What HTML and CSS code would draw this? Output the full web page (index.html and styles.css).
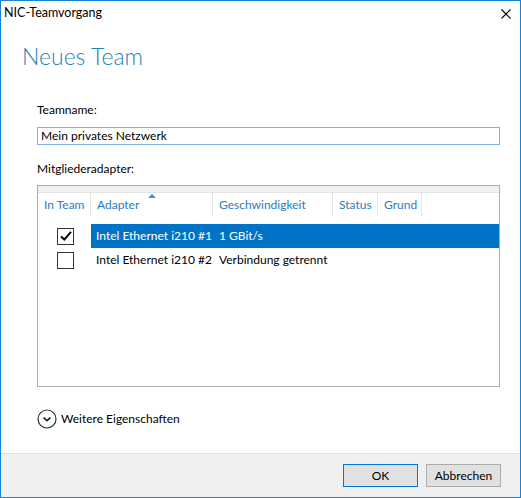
FILE: index.html
```html
<!DOCTYPE html>
<html lang="de">
<head>
<meta charset="utf-8">
<title>NIC-Teamvorgang</title>
<link rel="stylesheet" href="styles.css">
</head>
<body>
<div class="window">
  <div class="titlebar">
    <span class="title">NIC-Teamvorgang</span>
    <svg class="close" width="10" height="10" viewBox="0 0 10 10"><path d="M0.5 0.5 L9.5 9.5 M9.5 0.5 L0.5 9.5" stroke="#000" stroke-width="1.1" fill="none"/></svg>
  </div>
  <div class="content">
    <h1 class="heading">Neues Team</h1>
    <div class="form">
      <label class="label">Teamname:</label>
      <div class="input">Mein privates Netzwerk</div>
      <label class="label label2">Mitgliederadapter:</label>
      <div class="list">
        <div class="strip"></div>
        <div class="header">
          <div class="hcell">In Team</div>
          <div class="hcell sorted">Adapter<span class="arrow"></span></div>
          <div class="hcell">Geschwindigkeit</div>
          <div class="hcell">Status</div>
          <div class="hcell">Grund</div>
          <div class="hfill"></div>
        </div>
        <div class="row">
          <div class="cell check"><span class="box checked"><svg width="14" height="12" viewBox="0 0 14 12"><path d="M2 6.5 L5.3 9.6 L12 1.8" stroke="#000" stroke-width="2" fill="none"/></svg></span></div>
          <div class="sel">
            <div class="cell c2">Intel Ethernet i210 #1</div>
            <div class="cell c3">1 GBit/s</div>
          </div>
        </div>
        <div class="row">
          <div class="cell check"><span class="box"></span></div>
          <div class="nosel">
            <div class="cell c2">Intel Ethernet i210 #2</div>
            <div class="cell c3">Verbindung getrennt</div>
          </div>
        </div>
      </div>
      <div class="more">
        <svg width="20" height="20" viewBox="0 0 20 20"><circle cx="10" cy="10" r="9" stroke="#333" stroke-width="1.2" fill="none"/><path d="M6.6 8.6 L10 11.6 L13.4 8.6" stroke="#222" stroke-width="1.8" fill="none"/></svg>
        <span class="more-text">Weitere Eigenschaften</span>
      </div>
    </div>
  </div>
  <div class="footer">
    <button class="btn default">OK</button>
    <button class="btn">Abbrechen</button>
  </div>
</div>
</body>
</html>
```
FILE: styles.css
```css
html, body {
  margin: 0;
  padding: 0;
  background: #fff;
}
body {
  font-family: "Lato", "Noto Sans", sans-serif;
  font-size: 12px;
  color: #000;
}
.window {
  width: 521px;
  height: 498px;
  box-sizing: border-box;
  border: 1px solid #1883d7;
  display: flex;
  flex-direction: column;
  background: #fff;
}
.titlebar {
  height: 28px;
  display: flex;
  justify-content: space-between;
  align-items: flex-start;
  padding: 4px 9px 0 3px;
  box-sizing: border-box;
}
.title {
  font-size: 12.5px;
  line-height: 16px;
}
.close {
  margin-top: 4px;
}
.content {
  padding: 0 20px 0 21px;
}
.heading {
  margin: 11px 0 0 0;
  font-size: 23px;
  line-height: 32px;
  font-weight: 300;
  color: #2581b9;
}
.form {
  padding-left: 15px;
}
.label {
  display: block;
  margin-top: 30px;
  line-height: 16px;
}
.label2 {
  margin-top: 16px;
}
.input {
  margin-top: 9px;
  height: 18px;
  box-sizing: border-box;
  border: 1px solid #7eb4ea;
  padding: 0 3px;
  line-height: 15px;
  white-space: nowrap;
}
.list {
  margin-top: 8px;
  height: 202px;
  box-sizing: border-box;
  border: 1px solid #adadad;
}
.strip {
  height: 6px;
  background: #f0f0f0;
  border-bottom: 1px solid #e3e3e3;
}
.header {
  display: grid;
  grid-template-columns: 53px 122px 120px 45px 44px 1fr;
  height: 23px;
}
.hcell {
  border-right: 1px solid #e5e5e5;
  color: #2a7cc0;
  padding-left: 6px;
  line-height: 23px;
  position: relative;
  white-space: nowrap;
}
.arrow {
  position: absolute;
  left: 57px;
  top: 1px;
  width: 0;
  height: 0;
  border-left: 4px solid transparent;
  border-right: 4px solid transparent;
  border-bottom: 4px solid #3c8fd0;
}
.row {
  display: flex;
  height: 24px;
}
.header + .row {
  margin-top: 8px;
}
.check {
  width: 53px;
  display: flex;
  align-items: center;
  padding-left: 19px;
  box-sizing: border-box;
}
.box {
  width: 17px;
  height: 17px;
  box-sizing: border-box;
  border: 1px solid #333;
  background: #fff;
  display: flex;
  align-items: center;
  justify-content: center;
}
.sel, .nosel {
  flex: 1;
  display: flex;
}
.sel {
  background: #0073c7;
  color: #fff;
}
.cell {
  line-height: 24px;
  white-space: nowrap;
}
.c2 {
  width: 122px;
  padding-left: 5px;
  box-sizing: border-box;
}
.c3 {
  padding-left: 6px;
}
.more {
  display: flex;
  align-items: center;
  margin-top: 22px;
  gap: 4px;
}
.more-text {
  font-size: 12px;
  line-height: 20px;
}
.footer {
  margin-top: auto;
  height: 44px;
  box-sizing: border-box;
  border-top: 1px solid #dfdfdf;
  background: #f0f0f0;
  display: flex;
  justify-content: flex-end;
  align-items: flex-start;
  gap: 8px;
  padding: 10px 19px 0 0;
}
.btn {
  width: 75px;
  height: 23px;
  box-sizing: border-box;
  border: 1px solid #adadad;
  background: #e1e1e1;
  font-family: "Lato", "Noto Sans", sans-serif;
  font-size: 12px;
  color: #000;
  padding: 0;
  margin: 0;
}
.btn.default {
  border-color: #0078d7;
}
```
